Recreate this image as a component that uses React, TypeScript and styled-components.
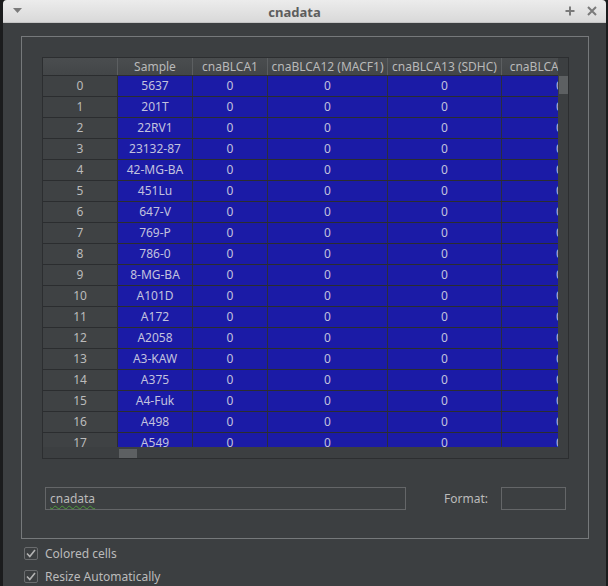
import React from "react";
import styled, { createGlobalStyle } from "styled-components";

const GlobalStyle = createGlobalStyle`
  html, body { margin: 0; padding: 0; background: #1b1c1d; }
  body { width: 608px; height: 586px; overflow: hidden; font-family: "Noto Sans", "DejaVu Sans", sans-serif; }
`;

const Desktop = styled.div`
  display: flex;
  width: 608px;
  height: 586px;
  background: #1b1c1d;
  padding-left: 3px;
  box-sizing: border-box;
`;

const Window = styled.div`
  width: 603px;
  height: 586px;
  display: flex;
  flex-direction: column;
  background: #3c3f41;
  border-radius: 4px 4px 0 0;
  overflow: hidden;
`;

const TitleBar = styled.div`
  height: 23px;
  flex: none;
  display: flex;
  align-items: center;
  background: linear-gradient(#ececec, #d9d9d9);
  border-bottom: 1px solid #c4c4c4;
  box-sizing: border-box;
`;

const TitleSide = styled.div<{ $w: number }>`
  width: ${(p) => p.$w}px;
  display: flex;
  align-items: center;
  justify-content: center;
  gap: 12px;
`;

const Title = styled.div`
  flex: 1;
  text-align: center;
  font-size: 13px;
  font-weight: bold;
  color: #5d5d5d;
  padding-top: 1px;
`;

const Body = styled.div`
  flex: 1;
  display: flex;
  flex-direction: column;
  padding: 13px 17px 0 18px;
`;

const GroupBox = styled.div`
  border: 1px solid #76797b;
  padding: 20px 20px 28px 20px;
  display: flex;
  flex-direction: column;
`;

const TableFrame = styled.div`
  width: 527px;
  height: 402px;
  box-sizing: border-box;
  border: 1px solid #2c2e30;
  display: grid;
  grid-template-columns: 515px 10px;
  grid-template-rows: 389px 11px;
  background: #3c3f41;
`;

const Viewport = styled.div`
  overflow: hidden;
  display: flex;
  flex-direction: column;
`;

const Row = styled.div<{ $header?: boolean }>`
  display: flex;
  flex: none;
  height: ${(p) => (p.$header ? 18 : 21)}px;
  box-sizing: border-box;
  border-bottom: 1px solid #2b2d2f;
`;

const HeaderCell = styled.div<{ $w: number }>`
  flex: none;
  width: ${(p) => p.$w}px;
  box-sizing: border-box;
  background: linear-gradient(#4a4d4f, #434648);
  border-right: 1px solid #5c5f61;
  color: #b9b9b9;
  font-size: 12px;
  line-height: 17px;
  text-align: center;
  white-space: nowrap;
  overflow: hidden;
`;

const RowHead = styled.div<{ $w: number }>`
  flex: none;
  width: ${(p) => p.$w}px;
  box-sizing: border-box;
  background: #3f4244;
  border-right: 1px solid #2b2d2f;
  color: #bbbbbb;
  font-size: 12px;
  line-height: 20px;
  text-align: center;
`;

const Cell = styled.div<{ $w: number }>`
  flex: none;
  width: ${(p) => p.$w}px;
  box-sizing: border-box;
  background: #1b1ba6;
  border-right: 1px solid #2b2d3f;
  color: #c2c2de;
  font-size: 12px;
  line-height: 20px;
  text-align: center;
  white-space: nowrap;
`;

const VScroll = styled.div`
  background: #3c3f41;
  display: flex;
  flex-direction: column;
  padding-top: 18px;
`;

const VHandle = styled.div`
  width: 9px;
  height: 18px;
  margin-left: 1px;
  background: #5d6062;
`;

const HScroll = styled.div`
  background: #3c3f41;
  display: flex;
  align-items: center;
`;

const HHandle = styled.div`
  width: 18px;
  height: 9px;
  margin-left: 76px;
  margin-top: 1px;
  background: #5d6062;
`;

const Corner = styled.div`
  background: #3c3f41;
`;

const BottomRow = styled.div`
  display: flex;
  align-items: center;
  margin-top: 28px;
  padding: 0 2px 0 3px;
`;

const LineEdit = styled.div<{ $w: number }>`
  width: ${(p) => p.$w}px;
  height: 23px;
  box-sizing: border-box;
  border: 1px solid #646668;
  background: #3c3f41;
  color: #bbbbbb;
  font-size: 12px;
  line-height: 21px;
  padding-left: 4px;
`;

const Squiggle = styled.span`
  text-decoration: underline wavy #4d9a3a;
  text-decoration-thickness: 1px;
  text-underline-offset: 2px;
`;

const Label = styled.div`
  flex: 1;
  text-align: right;
  padding-right: 13px;
  color: #bbbbbb;
  font-size: 12px;
`;

const Checks = styled.div`
  display: flex;
  flex-direction: column;
  gap: 7px;
  padding: 6px 0 0 3px;
`;

const CheckRow = styled.label`
  display: flex;
  align-items: center;
  gap: 7px;
  color: #bbbbbb;
  font-size: 12px;
  height: 16px;
`;

const Box = styled.span`
  width: 14px;
  height: 13px;
  box-sizing: border-box;
  border: 1px solid #6a6c6e;
  border-radius: 2px;
  display: flex;
  align-items: center;
  justify-content: center;
`;

const widths = [75, 75, 75, 120, 114, 116];
const headers = ["", "Sample", "cnaBLCA1", "cnaBLCA12 (MACF1)", "cnaBLCA13 (SDHC)", "cnaBLCA14 (ATF6)"];
const samples = [
  "5637", "201T", "22RV1", "23132-87", "42-MG-BA", "451Lu", "647-V", "769-P", "786-0",
  "8-MG-BA", "A101D", "A172", "A2058", "A3-KAW", "A375", "A4-Fuk", "A498", "A549",
];

const Check = () => (
  <Box>
    <svg width="10" height="9" viewBox="0 0 10 9">
      <path d="M1 4.5 L3.8 7.5 L9 1" fill="none" stroke="#b4b4b4" strokeWidth="1.6" />
    </svg>
  </Box>
);

export default function App() {
  return (
    <>
      <GlobalStyle />
      <Desktop>
        <Window>
          <TitleBar>
            <TitleSide $w={30}>
              <svg width="10" height="6" viewBox="0 0 10 6">
                <path d="M0 0 H9 L4.5 5 Z" fill="#7a7a7a" />
              </svg>
            </TitleSide>
            <Title>cnadata</Title>
            <TitleSide $w={50}>
              <svg width="10" height="10" viewBox="0 0 10 10">
                <path d="M5 0.5 V9.5 M0.5 5 H9.5" stroke="#7a7a7a" strokeWidth="2" />
              </svg>
              <svg width="10" height="10" viewBox="0 0 10 10">
                <path d="M1 1 L9 9 M9 1 L1 9" stroke="#7a7a7a" strokeWidth="2" />
              </svg>
            </TitleSide>
          </TitleBar>
          <Body>
            <GroupBox>
              <TableFrame>
                <Viewport>
                  <Row $header>
                    {headers.map((h, i) => (
                      <HeaderCell key={i} $w={widths[i]}>{h}</HeaderCell>
                    ))}
                  </Row>
                  {samples.map((s, r) => (
                    <Row key={r}>
                      <RowHead $w={widths[0]}>{r}</RowHead>
                      <Cell $w={widths[1]}>{s}</Cell>
                      <Cell $w={widths[2]}>0</Cell>
                      <Cell $w={widths[3]}>0</Cell>
                      <Cell $w={widths[4]}>0</Cell>
                      <Cell $w={widths[5]}>0</Cell>
                    </Row>
                  ))}
                </Viewport>
                <VScroll>
                  <VHandle />
                </VScroll>
                <HScroll>
                  <HHandle />
                </HScroll>
                <Corner />
              </TableFrame>
              <BottomRow>
                <LineEdit $w={361}>
                  <Squiggle>cnadata</Squiggle>
                </LineEdit>
                <Label>Format:</Label>
                <LineEdit $w={65} />
              </BottomRow>
            </GroupBox>
            <Checks>
              <CheckRow>
                <Check />
                Colored cells
              </CheckRow>
              <CheckRow>
                <Check />
                Resize Automatically
              </CheckRow>
            </Checks>
          </Body>
        </Window>
      </Desktop>
    </>
  );
}
